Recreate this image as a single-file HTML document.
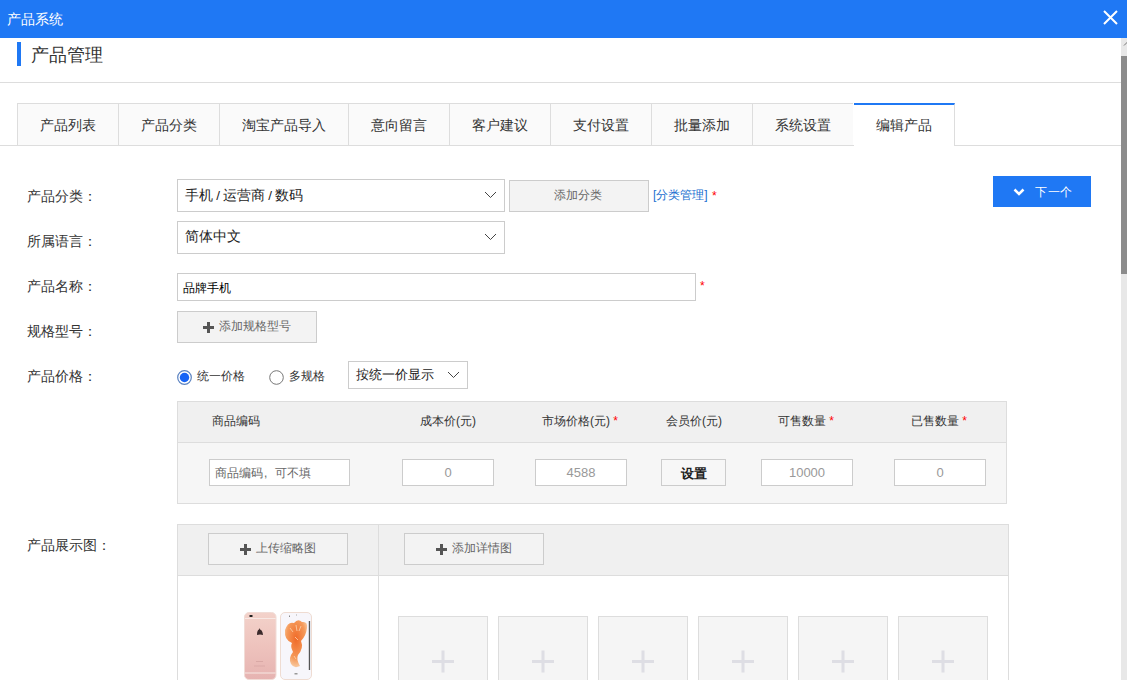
<!DOCTYPE html>
<html><head><meta charset="utf-8">
<style>
*{margin:0;padding:0;box-sizing:border-box}
html,body{width:1127px;height:680px;overflow:hidden;background:#fff;font-family:"Liberation Sans",sans-serif;color:#333}
.a{position:absolute}
.t{position:absolute;white-space:nowrap;line-height:1}
.bar{left:0;top:0;width:1127px;height:38px;background:#1f78f4}
.box{position:absolute;border:1px solid #ccc;background:#fff}
.btn{position:absolute;border:1px solid #ccc;background:#f3f3f3}
.tab{position:absolute;top:103px;height:42px;background:#fafafa;border:1px solid #ddd;border-bottom:none;border-right:none}
.red{color:#f00}
</style></head><body>
<!-- title bar -->
<div class="a bar"></div>
<div class="t" style="left:7px;top:12px;font-size:14px;color:#fff">产品系统</div>
<svg class="a" style="left:1103px;top:10px" width="15" height="15" viewBox="0 0 15 15"><path d="M1 1L14 14M14 1L1 14" stroke="#fff" stroke-width="2"/></svg>

<!-- heading -->
<div class="a" style="left:17px;top:42px;width:4px;height:24px;background:#1f78f4"></div>
<div class="t" style="left:31px;top:46px;font-size:18px;color:#333">产品管理</div>
<div class="a" style="left:0;top:82px;width:1121px;height:1px;background:#ddd"></div>

<!-- tabs -->
<div class="a" style="left:0;top:145px;width:1121px;height:1px;background:#ddd"></div>
<div class="tab" style="left:17px;width:101px"></div>
<div class="tab" style="left:118px;width:101px"></div>
<div class="tab" style="left:219px;width:129px"></div>
<div class="tab" style="left:348px;width:101px"></div>
<div class="tab" style="left:449px;width:101px"></div>
<div class="tab" style="left:550px;width:101px"></div>
<div class="tab" style="left:651px;width:101px"></div>
<div class="tab" style="left:752px;width:101px"></div>
<div class="a" style="left:854px;top:103px;width:101px;height:43px;background:#fff;border-right:1px solid #ddd;border-top:2px solid #1f78f4"></div>
<div class="t" style="left:40px;top:118px;font-size:14px">产品列表</div>
<div class="t" style="left:141px;top:118px;font-size:14px">产品分类</div>
<div class="t" style="left:242px;top:118px;font-size:14px">淘宝产品导入</div>
<div class="t" style="left:371px;top:118px;font-size:14px">意向留言</div>
<div class="t" style="left:472px;top:118px;font-size:14px">客户建议</div>
<div class="t" style="left:573px;top:118px;font-size:14px">支付设置</div>
<div class="t" style="left:674px;top:118px;font-size:14px">批量添加</div>
<div class="t" style="left:775px;top:118px;font-size:14px">系统设置</div>
<div class="t" style="left:876px;top:118px;font-size:14px">编辑产品</div>

<!-- labels -->
<div class="t" style="left:27px;top:189px;font-size:14px">产品分类：</div>
<div class="t" style="left:27px;top:234px;font-size:14px">所属语言：</div>
<div class="t" style="left:27px;top:279px;font-size:14px">产品名称：</div>
<div class="t" style="left:27px;top:324px;font-size:14px">规格型号：</div>
<div class="t" style="left:27px;top:369px;font-size:14px">产品价格：</div>
<div class="t" style="left:27px;top:538px;font-size:14px">产品展示图：</div>

<!-- row 1 -->
<div class="box" style="left:177px;top:179px;width:328px;height:33px"></div>
<div class="t" style="left:185px;top:188.5px;font-size:13.5px;word-spacing:-0.6px;color:#222">手机 / 运营商 / 数码</div>
<svg class="a" style="left:484px;top:191px" width="13" height="8" viewBox="0 0 13 8"><path d="M1 1L6.5 6.5L12 1" fill="none" stroke="#444" stroke-width="1"/></svg>
<div class="btn" style="left:509px;top:180px;width:140px;height:32px"></div>
<div class="t" style="left:554px;top:189px;font-size:12px;color:#666">添加分类</div>
<div class="t" style="left:653px;top:189px;font-size:12px;color:#1a6fd0">[分类管理]</div>
<div class="t red" style="left:712px;top:190px;font-size:12px">*</div>
<!-- next -->
<div class="a" style="left:993px;top:176px;width:98px;height:31px;background:#1f78f4"></div>
<svg class="a" style="left:1013px;top:188px" width="12" height="8" viewBox="0 0 12 8"><path d="M1.5 1.5L6 6L10.5 1.5" fill="none" stroke="#fff" stroke-width="2.5"/></svg>
<div class="t" style="left:1035px;top:186px;font-size:12px;color:#fff;letter-spacing:0.5px">下一个</div>

<!-- row 2 -->
<div class="box" style="left:177px;top:221px;width:328px;height:33px"></div>
<div class="t" style="left:185px;top:229px;font-size:14px;color:#222">简体中文</div>
<svg class="a" style="left:484px;top:233px" width="13" height="8" viewBox="0 0 13 8"><path d="M1 1L6.5 6.5L12 1" fill="none" stroke="#444" stroke-width="1"/></svg>

<!-- row 3 -->
<div class="box" style="left:177px;top:273px;width:519px;height:28px"></div>
<div class="t" style="left:183px;top:282px;font-size:12px;color:#000">品牌手机</div>
<div class="t red" style="left:700px;top:280px;font-size:12px">*</div>

<!-- row 4 -->
<div class="btn" style="left:177px;top:311px;width:140px;height:32px"></div>
<svg class="a" style="left:203px;top:322px" width="11" height="11" viewBox="0 0 11 11"><path d="M0 5.5H11M5.5 0V11" stroke="#555" stroke-width="3"/></svg>
<div class="t" style="left:219px;top:320px;font-size:12px;color:#666">添加规格型号</div>

<!-- row 5 -->
<svg class="a" style="left:177px;top:370px" width="15" height="15" viewBox="0 0 15 15"><circle cx="7.5" cy="7.5" r="6.8" fill="#fff" stroke="#5a82c0" stroke-width="1.2"/><circle cx="7.5" cy="7.5" r="4.7" fill="#1764f5"/></svg>
<div class="t" style="left:197px;top:370px;font-size:12px">统一价格</div>
<svg class="a" style="left:269px;top:370px" width="15" height="15" viewBox="0 0 15 15"><circle cx="7.5" cy="7.5" r="6.8" fill="#fff" stroke="#777" stroke-width="1"/></svg>
<div class="t" style="left:289px;top:370px;font-size:12px">多规格</div>
<div class="box" style="left:348px;top:361px;width:120px;height:28px"></div>
<div class="t" style="left:356px;top:368px;font-size:13px;color:#222">按统一价显示</div>
<svg class="a" style="left:447px;top:371px" width="13" height="8" viewBox="0 0 13 8"><path d="M1 1L6.5 6.5L12 1" fill="none" stroke="#444" stroke-width="1"/></svg>

<!-- price table -->
<div class="a" style="left:177px;top:401px;width:830px;height:103px;border:1px solid #ddd;background:#f6f6f6"></div>
<div class="a" style="left:178px;top:402px;width:828px;height:41px;background:#f0f0f0;border-bottom:1px solid #ddd"></div>
<div class="t" style="left:212px;top:415px;font-size:12px">商品编码</div>
<div class="t" style="left:420px;top:415px;font-size:12px">成本价(元)</div>
<div class="t" style="left:542px;top:415px;font-size:12px">市场价格(元) <span class="red">*</span></div>
<div class="t" style="left:666px;top:415px;font-size:12px">会员价(元)</div>
<div class="t" style="left:778px;top:415px;font-size:12px">可售数量 <span class="red">*</span></div>
<div class="t" style="left:911px;top:415px;font-size:12px">已售数量 <span class="red">*</span></div>

<div class="box" style="left:209px;top:459px;width:141px;height:27px"></div>
<div class="t" style="left:215px;top:467px;font-size:12px;color:#666">商品编码<span style="display:inline-block;width:12px;padding-left:1px">,</span>可不填</div>
<div class="box" style="left:402px;top:459px;width:92px;height:27px"></div>
<div class="t" style="left:402px;width:92px;text-align:center;top:466px;font-size:13px;color:#999">0</div>
<div class="box" style="left:535px;top:459px;width:92px;height:27px"></div>
<div class="t" style="left:535px;width:92px;text-align:center;top:466px;font-size:13px;color:#999">4588</div>
<div class="btn" style="left:661px;top:459px;width:65px;height:27px;background:#f7f7f7"></div>
<div class="t" style="left:661px;width:65px;text-align:center;top:467px;font-size:13px;font-weight:bold;color:#222">设置</div>
<div class="box" style="left:761px;top:459px;width:92px;height:27px"></div>
<div class="t" style="left:761px;width:92px;text-align:center;top:466px;font-size:13px;color:#999">10000</div>
<div class="box" style="left:894px;top:459px;width:92px;height:27px"></div>
<div class="t" style="left:894px;width:92px;text-align:center;top:466px;font-size:13px;color:#999">0</div>

<!-- image table -->
<div class="a" style="left:177px;top:524px;width:832px;height:170px;border:1px solid #ddd;background:#fff"></div>
<div class="a" style="left:178px;top:525px;width:830px;height:51px;background:#f0f0f0;border-bottom:1px solid #ddd"></div>
<div class="a" style="left:378px;top:525px;width:1px;height:160px;background:#ddd"></div>
<div class="btn" style="left:208px;top:533px;width:140px;height:32px"></div>
<svg class="a" style="left:240px;top:544px" width="11" height="11" viewBox="0 0 11 11"><path d="M0 5.5H11M5.5 0V11" stroke="#555" stroke-width="3"/></svg>
<div class="t" style="left:256px;top:542px;font-size:12px;color:#666">上传缩略图</div>
<div class="btn" style="left:404px;top:533px;width:140px;height:32px"></div>
<svg class="a" style="left:436px;top:544px" width="11" height="11" viewBox="0 0 11 11"><path d="M0 5.5H11M5.5 0V11" stroke="#555" stroke-width="3"/></svg>
<div class="t" style="left:452px;top:542px;font-size:12px;color:#666">添加详情图</div>

<!-- boxes -->
<div class="a" style="left:398px;top:616px;width:90px;height:90px;border:1px solid #ddd;background:#f5f5f5"></div>
<div class="a" style="left:498px;top:616px;width:90px;height:90px;border:1px solid #ddd;background:#f5f5f5"></div>
<div class="a" style="left:598px;top:616px;width:90px;height:90px;border:1px solid #ddd;background:#f5f5f5"></div>
<div class="a" style="left:698px;top:616px;width:90px;height:90px;border:1px solid #ddd;background:#f5f5f5"></div>
<div class="a" style="left:798px;top:616px;width:90px;height:90px;border:1px solid #ddd;background:#f5f5f5"></div>
<div class="a" style="left:898px;top:616px;width:90px;height:90px;border:1px solid #ddd;background:#f5f5f5"></div>
<svg class="a" style="left:0;top:0" width="1127" height="680">
<g stroke="#dedee4" stroke-width="3">
<path d="M432 661.5H454M443 650.5V672.5"/>
<path d="M532 661.5H554M543 650.5V672.5"/>
<path d="M632 661.5H654M643 650.5V672.5"/>
<path d="M732 661.5H754M743 650.5V672.5"/>
<path d="M832 661.5H854M843 650.5V672.5"/>
<path d="M932 661.5H954M943 650.5V672.5"/>
</g></svg>

<!-- phone image -->
<svg class="a" style="left:238px;top:606px" width="80" height="74" viewBox="0 0 80 74">
<defs><linearGradient id="pk" x1="0" y1="0" x2="0" y2="1"><stop offset="0" stop-color="#f3d2ca"/><stop offset="0.5" stop-color="#eec3bd"/><stop offset="1" stop-color="#e6b3b1"/></linearGradient>
<radialGradient id="fl" cx="0.5" cy="0.4" r="0.6"><stop offset="0" stop-color="#f06a28"/><stop offset="0.7" stop-color="#f59a5a"/><stop offset="1" stop-color="#f8c9a0"/></radialGradient></defs>
<rect x="6.5" y="6.5" width="31.5" height="67" rx="4.5" fill="url(#pk)" stroke="#f1dcd6" stroke-width="1"/>
<rect x="7" y="12" width="30.5" height="1" fill="#f8e8e4"/>
<rect x="7" y="66.5" width="30.5" height="1" fill="#f8e8e4"/>
<rect x="11.5" y="9" width="3" height="2" fill="#222"/>
<path d="M19 29 Q19 24 21 23.5 L21.5 22 L22 23.5 Q24.5 24 25 29 Q22 28 19 29Z" fill="#3b2a2b"/>
<rect x="18" y="55" width="7" height="1" fill="#d9a8a5"/>
<rect x="16" y="59.5" width="11" height="1" fill="#dcaaa7"/>
<rect x="42.5" y="6.5" width="31" height="67" rx="4.5" fill="#f7f6fb" stroke="#efdcd2" stroke-width="1"/>
<path d="M47 24 Q50 15 56 17 Q60 12 64 16 Q70 15 69 22 Q68 30 63 35 Q66 42 60 49 Q58 53 62 60 Q56 63 53 58 Q50 52 55 46 Q52 40 54 37 Q46 34 47 24Z" fill="url(#fl)"/><path d="M52 22l3 4M58 19l1 6M63 20l-2 5M57 31l3 3M56 50l2 3" stroke="#fbd3b0" stroke-width="0.8"/>
<rect x="70.8" y="15" width="1.3" height="49" fill="#555"/>
<rect x="51" y="9.5" width="1" height="1.5" fill="#888"/><rect x="58" y="8.5" width="1" height="1" fill="#aaa"/>
<rect x="56.5" y="67" width="3" height="1.5" fill="#999"/>
</svg>

<!-- scrollbar -->
<div class="a" style="left:1121px;top:38px;width:6px;height:642px;background:#e8e8e8"></div>
<div class="a" style="left:1121px;top:56px;width:6px;height:218px;background:#8c8c8c"></div>
<svg class="a" style="left:1121px;top:38px" width="6" height="18"><path d="M3 7.5L6.5 4" stroke="#777" stroke-width="1"/></svg>
</body></html>
